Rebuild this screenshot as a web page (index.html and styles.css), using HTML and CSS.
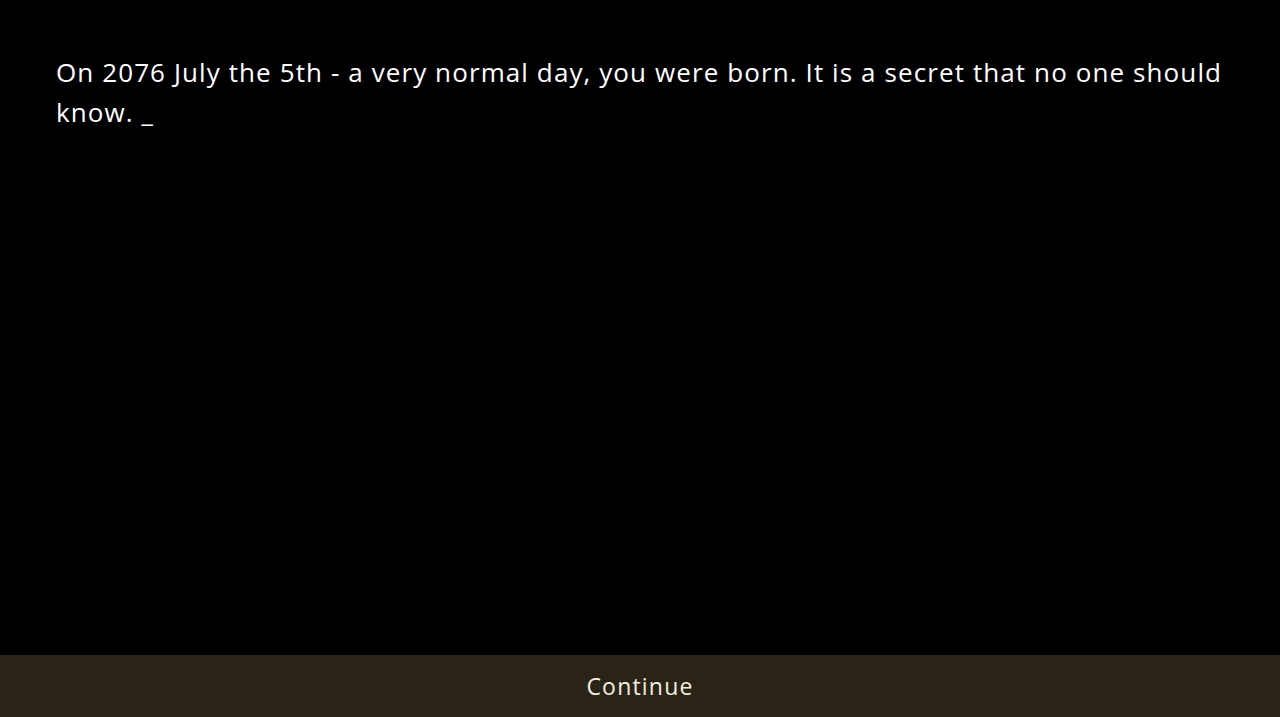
FILE: index.html
```html
<!DOCTYPE html>
<html>
<head>
<meta charset="utf-8">
<link rel="stylesheet" href="styles.css">
</head>
<body>
<div class="screen">
  <main class="story">
    <p class="text">On 2076 July the 5th - a very normal day, you were born. It is a secret that no one should know. _</p>
  </main>
  <footer class="bar">
    <button class="continue">Continue</button>
  </footer>
</div>
</body>
</html>
```

FILE: styles.css
```css
* { box-sizing: border-box; }
html, body { margin: 0; padding: 0; background: #000; }
.screen {
  width: 1280px;
  height: 717px;
  display: flex;
  flex-direction: column;
  background: #000;
  font-family: "Open Sans", "DejaVu Sans", sans-serif;
}
.story {
  flex: 1;
  padding: 52px 56px 0 56px;
}
.text {
  margin: 0;
  color: #fff;
  font-size: 26px;
  line-height: 40px;
  letter-spacing: 1.1px;
}
.bar {
  height: 62px;
  background: #2a2418;
  display: flex;
  align-items: center;
  justify-content: center;
}
.continue {
  background: none;
  border: 0;
  color: #f2eedf;
  font-family: inherit;
  font-size: 23px;
  letter-spacing: 1.2px;
  padding: 0;
}
```
